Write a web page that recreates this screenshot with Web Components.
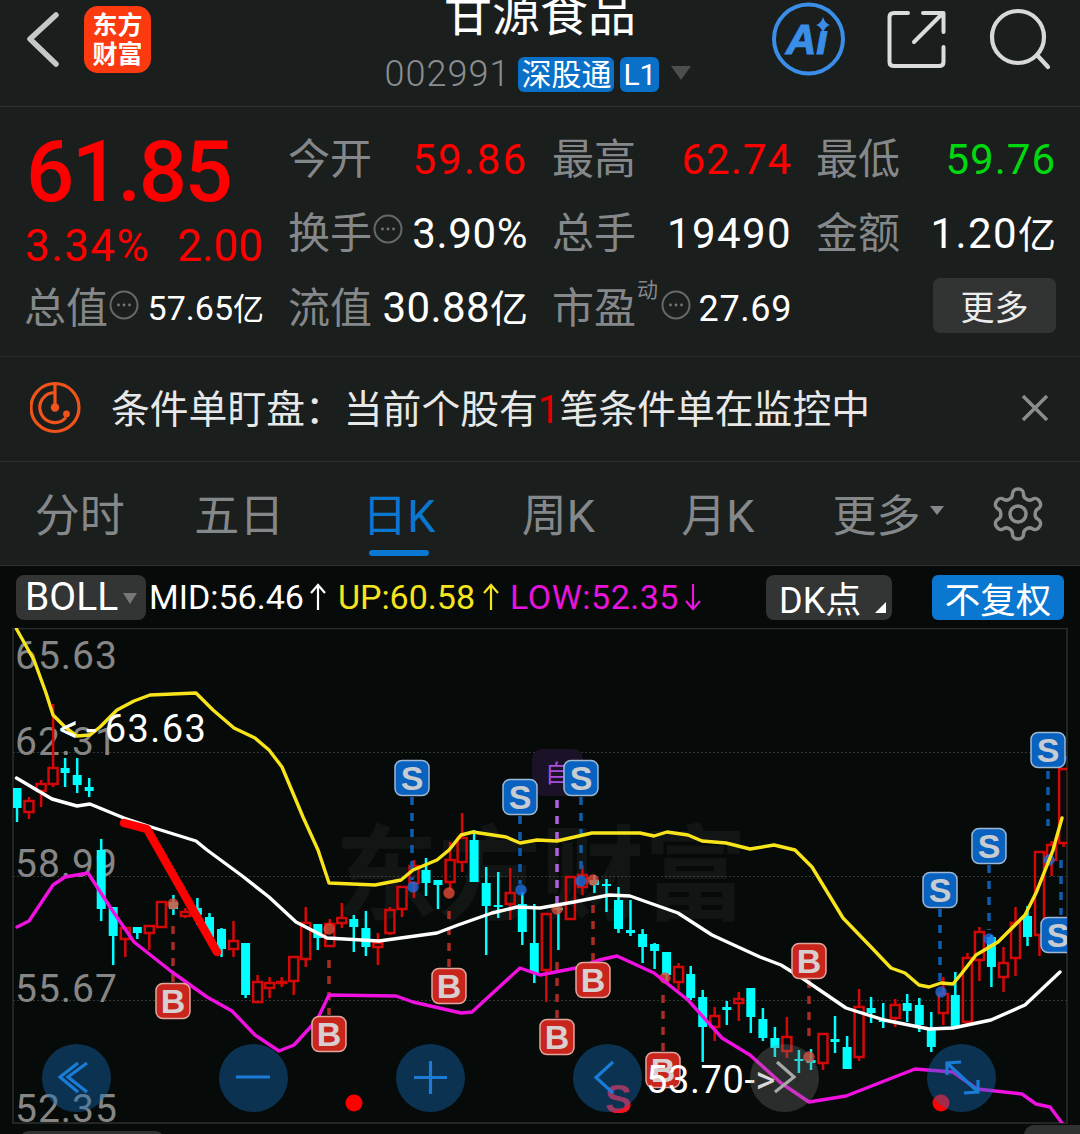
<!DOCTYPE html>
<html lang="zh-CN">
<head>
<meta charset="utf-8">
<title>甘源食品</title>
<style>
  html, body { margin: 0; padding: 0; background: #060a08; }
  body { width: 1080px; height: 1134px; overflow: hidden; font-family: Roboto, "Noto Sans CJK SC", sans-serif; color: #fff; }
</style>
</head>
<body>
<top-bar></top-bar>
<quote-panel>
  <quote-cell label="今开" tone="up" track="2">59.86</quote-cell>
  <quote-cell label="最高" tone="up" track="1">62.74</quote-cell>
  <quote-cell label="最低" tone="down" track="1">59.76</quote-cell>
  <quote-cell label="换手" hint track=".6">3.90%</quote-cell>
  <quote-cell label="总手" track="1.4">19490</quote-cell>
  <quote-cell label="金额" track="1.4">1.20<small>亿</small></quote-cell>
  <quote-cell label="流值" track=".4">30.88<small>亿</small></quote-cell>
  <quote-cell label="市盈" sup="动" hint small track=".6">27.69</quote-cell>
  <more-button>更多</more-button>
</quote-panel>
<notice-bar>条件单盯盘：当前个股有<b>1</b>笔条件单在监控中</notice-bar>
<period-tabs></period-tabs>
<indicator-bar></indicator-bar>
<k-chart>
  <nav-btn kind="rewind"></nav-btn>
  <nav-btn kind="minus"></nav-btn>
  <nav-btn kind="plus"></nav-btn>
  <nav-btn kind="left"></nav-btn>
  <nav-btn kind="right"></nav-btn>
  <nav-btn kind="expand"></nav-btn>
</k-chart>

<script>
// small circled "..." hint
class InfoDot extends HTMLElement {
  constructor() {
    super();
    this.attachShadow({ mode: 'open' });
    this.shadowRoot.innerHTML = `
      <style>:host { display: inline-flex; width: 30px; height: 30px; flex: none; } svg { display: block; }</style>
      <svg width="30" height="30" viewBox="0 0 30 30">
        <circle cx="15" cy="15" r="13.5" fill="none" stroke="#666967" stroke-width="2"/>
        <circle cx="9.5" cy="15" r="1.4" fill="#777"/><circle cx="15" cy="15" r="1.4" fill="#777"/><circle cx="20.5" cy="15" r="1.4" fill="#777"/>
      </svg>`;
  }
}
customElements.define('info-dot', InfoDot);

class TopBar extends HTMLElement {
  constructor() {
    super();
    this.attachShadow({ mode: 'open' });
    this.shadowRoot.innerHTML = `
      <style>
        :host { display: grid; grid-template-columns: 1fr auto 1fr; height: 106px; background: #1a1e1c; border-bottom: 1px solid #2d312f; }
        .left { display: flex; align-items: flex-start; padding-left: 25px; gap: 25px; }
        .back { margin-top: 12px; }
        .logo { width: 67px; height: 67px; margin-top: 6px; background: #fb3a10; border-radius: 14px; color: #fff; font-weight: 700; font-size: 25px; line-height: 29px; display: flex; flex-direction: column; align-items: center; justify-content: center; }
        .mid { display: flex; flex-direction: column; align-items: center; }
        .name { font-size: 48px; line-height: 40px; margin-top: -5px; color: #fff; white-space: nowrap; }
        .sub { display: flex; align-items: center; margin: 21px 0 0 -4px; height: 36px; }
        .code { font-size: 36px; color: #8a8d90; letter-spacing: 1px; margin-right: 8px; font-weight: 300; }
        .tag { background: #0a70c8; color: #fff; height: 35px; border-radius: 6px; font-size: 30px; line-height: 35px; padding: 0 3px; margin-right: 6px; white-space: nowrap; }
        .tri { width: 0; height: 0; border-left: 10px solid transparent; border-right: 10px solid transparent; border-top: 14px solid #4c4f4e; margin-left: 6px; margin-top: -2px; }
        .right { display: flex; align-items: flex-start; justify-content: flex-end; padding-right: 26px; }
        svg { display: block; }
      </style>
      <div class="left">
        <svg class="back" width="34" height="56" viewBox="0 0 34 56"><path d="M31 3 L5 27 L31 52" fill="none" stroke="#c8c8c8" stroke-width="5.5" stroke-linecap="round" stroke-linejoin="round"/></svg>
        <div class="logo"><span>东方</span><span>财富</span></div>
      </div>
      <div class="mid">
        <div class="name">甘源食品</div>
        <div class="sub">
          <span class="code">002991</span>
          <span class="tag">深股通</span>
          <span class="tag">L1</span>
          <span class="tri"></span>
        </div>
      </div>
      <div class="right">
        <svg width="80" height="80" viewBox="0 0 80 80">
          <circle cx="39.500" cy="39" r="34.500" fill="none" stroke="#3a8ee8" stroke-width="4"/>
          <text x="17" y="54" font-family="Liberation Sans" font-weight="700" font-style="italic" font-size="42" fill="#3a8ee8" stroke="#3a8ee8" stroke-width="1.200">Ai</text>
          <rect x="49" y="18" width="13" height="13" fill="#1a1e1c"/>
          <path d="M54 17 Q56 23.500 61 25 Q56 26.500 54 33 Q52 26.500 47 25 Q52 23.500 54 17 Z" fill="#3a8ee8"/>
        </svg>
        <svg width="62" height="62" viewBox="0 0 62 62" style="margin:9px 0 0 37px">
          <path d="M22 4 H8 Q3.500 4 3.500 8 V53 Q3.500 57 8 57 H53 Q57.500 57 57.500 53 V38" fill="none" stroke="#dcdcdc" stroke-width="4" stroke-linecap="round"/>
          <path d="M28 33 L57 4 M37 4 H57.500 V23" fill="none" stroke="#dcdcdc" stroke-width="4" stroke-linecap="round" stroke-linejoin="round"/>
        </svg>
        <svg width="66" height="66" viewBox="0 0 66 66" style="margin:7px 0 0 40px">
          <circle cx="30" cy="30" r="26" fill="none" stroke="#d8d8d8" stroke-width="4.200"/>
          <path d="M49 48 L60 60" stroke="#d8d8d8" stroke-width="4.200" stroke-linecap="round"/>
        </svg>
      </div>`;
  }
}
customElements.define('top-bar', TopBar);

class QuotePanel extends HTMLElement {
  constructor() {
    super();
    this.attachShadow({ mode: 'open' });
    this.shadowRoot.innerHTML = `
      <style>
        :host { display: grid; grid-template-columns: 238px 765px; column-gap: 26px; height: 249px; padding-left: 25px; background: #1a1e1c; border-bottom: 1px solid #262a28; }
        .left { display: flex; flex-direction: column; padding-top: 20px; }
        .price { font-size: 85px; line-height: 90px; font-weight: 500; color: #ff0000; letter-spacing: -2.500px; height: 90px; margin-left: 1px; }
        .chg { display: flex; justify-content: space-between; height: 50px; margin: 4px 0 0 0; font-size: 44px; line-height: 50px; color: #f00; font-weight: 400; }
        .chg span:first-child { letter-spacing: 1.400px; }
        .total { display: flex; align-items: center; height: 60px; margin-top: 8px; }
        .total .lab { font-size: 42px; color: #85888a; line-height: 48px; margin-left: -1px; }
        .total info-dot { margin: -8px 0 0 1px; }
        .total .val { margin-left: auto; margin-right: -1px; font-size: 34px; line-height: 40px; color: #fff; white-space: nowrap; }
        .total small { font-size: 31px; }
        .cells { display: grid; grid-template-columns: repeat(3, 237px); column-gap: 27px; grid-auto-rows: 74.500px; padding-top: 15.500px; }
      </style>
      <div class="left">
        <div class="price">61.85</div>
        <div class="chg"><span>3.34%</span><span>2.00</span></div>
        <div class="total"><span class="lab">总值</span><info-dot></info-dot><span class="val">57.65<small>亿</small></span></div>
      </div>
      <div class="cells"><slot></slot></div>`;
  }
}
customElements.define('quote-panel', QuotePanel);

class QuoteCell extends HTMLElement {
  constructor() {
    super();
    this.attachShadow({ mode: 'open' });
  }
  connectedCallback() {
    const colors = { up: '#ff0000', down: '#00d810' };
    const tone = this.getAttribute('tone');
    const sup = this.getAttribute('sup');
    this.shadowRoot.innerHTML = `
      <style>
        :host { display: flex; align-items: center; white-space: nowrap; }
        .lab { font-size: 42px; color: #85888a; line-height: 48px; margin-left: -1px; }
        .sup { font-size: 21px; color: #85888a; align-self: flex-start; margin: 6px 0 0 1px; line-height: 24px; }
        info-dot { margin: -11px 0 0 1px; }
        .sup + info-dot { margin: -7px 0 0 3px; }
        .val { margin-left: auto; margin-right: -2px; font-size: ${this.hasAttribute('small') ? 36 : 42}px; line-height: 48px; color: ${colors[tone] || '#fff'}; letter-spacing: ${this.getAttribute('track')}px; }
        ::slotted(small) { font-size: 38px; letter-spacing: 0; }
      </style>
      <span class="lab">${this.getAttribute('label')}</span>
      ${sup ? `<span class="sup">${sup}</span>` : ''}
      ${this.hasAttribute('hint') ? '<info-dot></info-dot>' : ''}
      <span class="val"><slot></slot></span>`;
  }
}
customElements.define('quote-cell', QuoteCell);

class MoreButton extends HTMLElement {
  constructor() {
    super();
    this.attachShadow({ mode: 'open' });
    this.shadowRoot.innerHTML = `
      <style>
        :host { display: flex; align-items: center; justify-content: center; justify-self: end; align-self: center; width: 123px; height: 55px; margin: -6px -2px 0 0; background: #323433; border-radius: 7px; color: #ececec; font-size: 34px; }
      </style>
      <slot></slot>`;
  }
}
customElements.define('more-button', MoreButton);

class NoticeBar extends HTMLElement {
  constructor() {
    super();
    this.attachShadow({ mode: 'open' });
    this.shadowRoot.innerHTML = `
      <style>
        :host { display: flex; align-items: center; height: 102px; padding: 0 30px 2px; background: #1a1e1c; border-bottom: 1px solid #2b2f2d; color: #e8e8e8; font-size: 38.800px; white-space: nowrap; }
        .txt { margin: -4px 0 0 25px; flex: 1; }
        ::slotted(b) { color: #e00000; font-weight: 400; }
        svg { display: block; flex: none; }
      </style>
      <svg width="56" height="56" viewBox="0 0 56 56">
        <circle cx="25" cy="27.500" r="24" fill="none" stroke="#f0541a" stroke-width="3.200"/>
        <path d="M25 12.500 A15 15 0 1 0 36 37.500" fill="none" stroke="#f0541a" stroke-width="3.200"/>
        <path d="M25 4 V27.500" stroke="#f0541a" stroke-width="3.200"/>
        <circle cx="25" cy="27.500" r="4.200" fill="#f0541a"/>
        <circle cx="36.500" cy="34" r="3.400" fill="#f0541a"/>
      </svg>
      <span class="txt"><slot></slot></span>
      <svg width="30" height="30" viewBox="0 0 30 30"><path d="M3 3 L27 27 M27 3 L3 27" stroke="#8a8d8c" stroke-width="3.500"/></svg>`;
  }
}
customElements.define('notice-bar', NoticeBar);

class PeriodTabs extends HTMLElement {
  constructor() {
    super();
    this.attachShadow({ mode: 'open' });
    const tabs = ['分时', '五日', '日K', '周K', '月K'];
    this.shadowRoot.innerHTML = `
      <style>
        :host { display: flex; height: 103px; background: #1a1e1c; border-bottom: 1px solid #2d312f; }
        .tab { width: 159.500px; display: flex; align-items: center; justify-content: center; position: relative; font-size: 45px; color: #85888a; padding-bottom: 2px; box-sizing: border-box; }
        .on { color: #0a78d0; }
        .on::after { content: ""; position: absolute; left: 50%; margin-left: -30px; bottom: 9px; width: 60px; height: 6px; border-radius: 3px; background: #0a78d0; }
        .more { width: 146px; justify-content: flex-end; font-size: 44px; }
        .more i { width: 0; height: 0; border-left: 7px solid transparent; border-right: 7px solid transparent; border-top: 9px solid #85888a; margin: -4px 0 0 9px; }
        svg { display: block; margin-left: 44.500px; align-self: center; }
      </style>
      ${tabs.map((t, i) => `<div class="tab${i == 2 ? ' on' : ''}">${t}</div>`).join('')}
      <div class="tab more">更多<i></i></div>
      <svg width="60" height="60" viewBox="0 0 24 24" fill="none" stroke="#8a8d8c" stroke-width="1.400" stroke-linejoin="round">
        <path d="M12.220 2h-.44a2 2 0 0 0-2 2v.18a2 2 0 0 1-1 1.730l-.43.25a2 2 0 0 1-2 0l-.15-.08a2 2 0 0 0-2.730.73l-.22.38a2 2 0 0 0 .73 2.730l.15.1a2 2 0 0 1 1 1.720v.51a2 2 0 0 1-1 1.740l-.15.09a2 2 0 0 0-.73 2.730l.22.38a2 2 0 0 0 2.730.73l.15-.08a2 2 0 0 1 2 0l.43.25a2 2 0 0 1 1 1.730V20a2 2 0 0 0 2 2h.44a2 2 0 0 0 2-2v-.18a2 2 0 0 1 1-1.730l.43-.25a2 2 0 0 1 2 0l.15.08a2 2 0 0 0 2.730-.73l.22-.39a2 2 0 0 0-.73-2.730l-.15-.08a2 2 0 0 1-1-1.740v-.5a2 2 0 0 1 1-1.740l.15-.09a2 2 0 0 0 .73-2.730l-.22-.38a2 2 0 0 0-2.730-.73l-.15.08a2 2 0 0 1-2 0l-.43-.25a2 2 0 0 1-1-1.730V4a2 2 0 0 0-2-2z"/>
        <circle cx="12" cy="12" r="3.200"/>
      </svg>`;
  }
}
customElements.define('period-tabs', PeriodTabs);

class IndicatorBar extends HTMLElement {
  constructor() {
    super();
    this.attachShadow({ mode: 'open' });
    const arrow = (c, down) => `<svg width="18" height="28" viewBox="0 0 18 28"><path d="${down ? 'M9 1 V26 M2 18 L9 26 L16 18' : 'M9 27 V2 M2 10 L9 2 L16 10'}" fill="none" stroke="${c}" stroke-width="2.200"/></svg>`;
    this.shadowRoot.innerHTML = `
      <style>
        :host { display: flex; align-items: center; height: 62px; padding: 0 16px; font-size: 34px; white-space: nowrap; box-sizing: border-box; }
        .box { display: flex; align-items: center; height: 45px; border-radius: 8px; background: #333535; box-sizing: border-box; position: relative; }
        .boll { width: 130px; padding-left: 9px; font-size: 39px; }
        .boll i { position: absolute; right: 9px; top: 18px; width: 0; height: 0; border-left: 7.500px solid transparent; border-right: 7.500px solid transparent; border-top: 11px solid #777; }
        .item { display: flex; align-items: center; }
        .dk { width: 126px; padding-left: 13px; font-size: 36px; margin-left: auto; }
        .dk i { position: absolute; right: 6px; bottom: 7px; width: 0; height: 0; border-left: 11px solid transparent; border-bottom: 11px solid #fff; }
        .fq { width: 132px; justify-content: center; margin-left: 40px; background: #0a78d0; border-radius: 6px; font-size: 35.500px; }
        svg { display: block; }
      </style>
      <div class="box boll">BOLL<i></i></div>
      <div class="item" style="color:#fff;margin-left:3px;gap:5px">MID:56.46${arrow('#fff')}</div>
      <div class="item" style="color:#f5e41e;margin-left:11px;gap:7px">UP:60.58${arrow('#f5e41e')}</div>
      <div class="item" style="color:#e614dc;margin-left:10px;letter-spacing:.5px;gap:5px">LOW:52.35${arrow('#e614dc', true)}</div>
      <div class="box dk">DK点<i></i></div>
      <div class="box fq">不复权</div>`;
  }
}
customElements.define('indicator-bar', IndicatorBar);

class NavBtn extends HTMLElement {
  constructor() {
    super();
    this.attachShadow({ mode: 'open' });
  }
  connectedCallback() {
    const icons = {
      rewind: 'M36 19 L18 33 L36 48 M45 19 L26 33 L45 48',
      minus: 'M17 33 H51',
      plus: 'M18 33.500 H51 M34.500 17 V50',
      left: 'M40 18 L23 33.500 L40 49',
      right: 'M27 18 L44 33 L25 48',
      expand: 'M20 19 L51 48 M34 18 L20 19 L20 31 M51 36 L51 48 L37 49'
    };
    const kind = this.getAttribute('kind');
    const gray = kind == 'right';
    this.shadowRoot.innerHTML = `
      <style>
        :host { display: block; width: 69px; height: 68px; border-radius: 50%; background: ${gray ? 'rgba(125,130,125,.3)' : 'rgba(20,110,190,.4)'}; }
        svg { display: block; }
      </style>
      <svg width="69" height="68" viewBox="0 0 69 68"><path d="${icons[kind]}" fill="none" stroke="${gray ? '#a8aaa8' : '#1a7cd6'}" stroke-width="3.200"/></svg>`;
  }
}
customElements.define('nav-btn', NavBtn);

// x of candle i = 17 + 12.03 * i ; [hi, top, bottom, lo, red?]
const CANDLES = [
  [788,788,808,822,0],[797,801,812,819,1],[780,784,791,807,1],[704,768,784,787,1],[758,768,773,787,0],[758,775,785,793,0],[778,787,791,797,0],
  [839,850,909,921,0],[907,907,936,965,0],[928,928,939,957,1],[927,927,933,939,0],[926,926,933,950,1],[902,902,927,927,1],[895,902,909,915,0],
  [908,912,916,918,1],[898,908,915,925,0],[913,917,937,940,0],[928,929,949,957,0],[921,941,949,957,1],[943,943,995,998,0],[975,982,1002,1002,1],
  [977,983,988,998,1],[977,982,983,987,1],[957,957,981,995,1],[907,923,959,967,1],[924,924,938,950,0],[919,924,946,947,1],[903,918,923,928,1],
  [915,919,927,952,0],[911,928,947,956,0],[933,943,947,965,1],[907,910,933,935,1],[887,887,909,917,1],[860,866,883,898,1],[858,870,883,896,0],
  [880,880,885,909,0],[842,860,882,890,1],[813,838,862,872,1],[830,840,882,882,0],[867,883,906,955,0],[872,905,907,918,0],[868,893,904,920,1],
  [892,904,932,945,0],[904,943,973,983,0],[914,914,970,1002,1],[907,908,910,950,0],[877,877,919,919,1],[865,875,887,895,1],[875,880,885,893,0],
  [879,884,886,912,0],[887,900,929,933,0],[900,930,933,936,0],[929,934,947,963,0],[943,944,951,969,0],[952,952,975,982,0],[963,967,982,990,1],
  [966,974,998,1000,0],[990,997,1027,1062,0],[1007,1016,1027,1041,1],[1001,1007,1010,1025,0],[992,999,1003,1021,1],[988,988,1017,1033,0],
  [1008,1019,1038,1041,0],[1027,1038,1048,1057,0],[1017,1037,1051,1058,1],[1050,1059,1061,1073,0],[1049,1060,1063,1070,0],[1034,1034,1063,1070,1],
  [1016,1039,1042,1053,0],[1036,1047,1069,1069,0],[989,1007,1057,1061,1],[997,1008,1013,1023,0],[1003,1020,1021,1028,0],[999,1005,1018,1027,1],
  [994,1003,1011,1022,0],[998,1005,1025,1032,0],[1012,1028,1047,1052,0],[977,994,1013,1025,1],[972,995,1027,1027,0],[953,958,1022,1024,1],
  [927,932,960,981,1],[935,937,967,987,0],[947,963,977,992,1],[907,923,958,976,1],[906,916,937,946,0],[852,852,935,956,1],[841,845,860,876,1],[769,769,843,847,1]
];
const UP_LINE = '16.500,629 34,660 46,693 53,715 65,727 77,736 90,735 100,727 117,710 134,701 150,695 196,693 213,710 234,728 255,738 269,750 282,767 303,817 318,850 329,883 375,885 401,880 413,870 437,860 449,850 461,835 473,832 506,837 520,843 537,840 557,841 592,833 640,833 654,836 667,832 688,835 702,841 726,843 750,849 774,845 795,850 812,867 843,918 871,947 891,968 905,973 919,985 929,987 941,983 953,984 962,973 976,955 998,942 1025,915 1036,893 1053,850 1062,818';
const MID_LINE = '16.500,778 52,799 77,806 90,804 124,818 151,827 196,841 207,850 241,875 269,897 296,922 327,938 379,941 437,933 458,925 492,913 517,907 540,908 574,902 609,895 630,896 678,913 712,935 760,957 781,965 802,978 846,1008 884,1020 929,1029 953,1028 991,1020 1025,1005 1060,972';
const LOW_LINE = '17,927 29,921 53,885 65,877 88,873 110,907 134,942 172,972 207,997 232,1011 255,1035 279,1051 294,1045 317,1020 329,995 396,996 413,1002 461,1013 472,1012 520,968 540,975 576,968 599,960 617,956 654,973 688,1000 722,1038 750,1055 781,1083 809,1102 846,1096 915,1069 953,1072 977,1089 1022,1094 1036,1104 1050,1107 1062,1123';
// badge x, y, dash from, dash to, dot x, dot y
const SELLS = [[412,778,797,880,413,887],[520,797,816,884,521,890],[581,778,797,875,581,881],[1048,750,771,826,1061,758],[989,846,865,930,989,939],[940,890,909,985,941,992],[1058,935,860,915,1049,860]];
const BUYS = [[173,1001,926,982,173,904],[329,1034,960,1015,329,929],[449,986,911,967,449,893],[557,1037,962,1018,557,909],[593,980,905,962,593,880],[663,1070,995,1052,665,978],[809,961,980,1037,809,1057]];

class KChart extends HTMLElement {
  constructor() {
    super();
    this.attachShadow({ mode: 'open' });
    const line = (pts, c, w) => `<polyline points="${pts}" fill="none" stroke="${c}" stroke-width="${w}" stroke-linejoin="round" stroke-linecap="round"/>`;
    const label = (t, y) => `<text x="15" y="${y}" class="ax">${t}</text>`;
    let candles = '';
    CANDLES.forEach((c, i) => {
      const x = +(17 + 12.03 * i).toFixed(1);
      const [hi, top, bot, lo, red] = c;
      if (red) {
        candles += `<path d="M${x} ${hi} V${top} M${x} ${bot} V${lo}" stroke="#d40808" stroke-width="2.500"/>`;
        candles += `<rect x="${x - 4.5}" y="${top}" width="9" height="${Math.max(bot - top, 1)}" fill="none" stroke="#d40808" stroke-width="2.500"/>`;
      } else {
        candles += `<path d="M${x} ${hi} V${lo}" stroke="#00ffff" stroke-width="2.500"/>`;
        candles += `<rect x="${x - 4.5}" y="${top}" width="9" height="${Math.max(bot - top, 2)}" fill="#00ffff"/>`;
      }
    });
    const badge = (x, y, t, fill, edge, txt) => `
      <rect x="${x - 17}" y="${y - 17.5}" width="34" height="35" rx="7" fill="${fill}" stroke="${edge}" stroke-width="1.500"/>
      <text x="${x}" y="${y + 12}" text-anchor="middle" class="bd" fill="${txt}">${t}</text>`;
    const dash = (x, a, b, c) => `<path d="M${x} ${a} V${b}" stroke="${c}" stroke-width="3.500" stroke-dasharray="8 8"/>`;
    let marks = '';
    SELLS.forEach(s => {
      const dx = s[0] == 1058 ? 1061 : s[0];
      marks += dash(dx, s[2], s[3], '#0f5cae');
      marks += `<circle cx="${s[4]}" cy="${s[5]}" r="5.700" fill="#1e6ee6" opacity=".78"/>`;
    });
    BUYS.forEach(b => {
      marks += dash(b[0], b[2], b[3], '#a82c24');
      marks += `<circle cx="${b[4]}" cy="${b[5]}" r="5.700" fill="#e24a36" opacity=".8"/>`;
    });
    let badges = '';
    SELLS.forEach(s => badges += badge(s[0], s[1], 'S', '#0a62c0', '#9db8d2', '#c8ccd0'));
    BUYS.forEach(b => badges += badge(b[0], b[1], 'B', '#c8261c', '#e2a69e', '#d8d0d0'));
    this.shadowRoot.innerHTML = `
      <style>
        :host { display: block; position: relative; height: 506px; }
        svg { display: block; }
        .ax { font: 400 39px Roboto, sans-serif; fill: #868686; letter-spacing: 1px; }
        .ov { font: 400 38px Roboto, sans-serif; fill: #fff; letter-spacing: 1.400px; }
        .bd { font: 700 34px "Liberation Sans", sans-serif; }
        .wm { font: 700 103px "Noto Sans CJK SC", sans-serif; fill: #fff; opacity: .045; }
        .nav { position: absolute; left: 42px; top: 416px; display: flex; gap: 108px; }
      </style>
      <svg width="1080" height="506" viewBox="0 628 1080 506">
        <defs><clipPath id="f"><rect x="13" y="628" width="1054" height="495"/></clipPath></defs>
        <rect x="13" y="628.500" width="1054" height="494.500" fill="none" stroke="#2c2f2d" stroke-width="1.500"/>
        <path d="M13 752.500 H1067 M13 876.500 H1067 M13 1000.500 H1067" stroke="#333634" stroke-width="1" stroke-dasharray="2 2"/>
        <text x="335" y="912" class="wm">东方财富</text>
        ${label('65.63', 669)}${label('62.31', 755)}${label('58.99', 877)}${label('55.67', 1002)}${label('52.35', 1122)}
        <g clip-path="url(#f)">
          ${candles}
          ${marks}
          <rect x="532" y="749" width="51" height="47" rx="10" fill="#1c1228"/>
          <text x="545" y="782" font-family="Noto Sans CJK SC" font-size="24" fill="#a84fe0">自</text>
          <path d="M557 800 V905" stroke="#b060e0" stroke-width="3.500" stroke-dasharray="8 8"/>
          ${line(LOW_LINE, '#f010e0', 3.4)}
          ${line(MID_LINE, '#fff', 3.4)}
          ${line(UP_LINE, '#f8e41a', 3.4)}
          <path d="M124 823 L147 829 L217 952" fill="none" stroke="#ff0000" stroke-width="8.500" stroke-linecap="round" stroke-linejoin="round"/>
          ${badges}
          <text x="59" y="742" class="ov"><tspan style="letter-spacing:8px">&lt;-</tspan>63.63</text>
          <text x="646" y="1093" class="ov" style="letter-spacing:.6px">53.70-&gt;</text>
          <circle cx="354" cy="1103" r="8.500" fill="#ff0000"/>
          <circle cx="941" cy="1103" r="8.500" fill="#ff0000"/>
          <text x="605" y="1113" font-family="Liberation Sans" font-weight="700" font-size="40" fill="#f01428">S</text>
        </g>
        <rect x="19" y="1131" width="146" height="20" rx="10" fill="#2e3230"/>
        <rect x="1024" y="1125" width="70" height="30" rx="10" fill="#2e3230"/>
      </svg>
      <div class="nav"><slot></slot></div>`;
  }
}
customElements.define('k-chart', KChart);
</script>
</body>
</html>
